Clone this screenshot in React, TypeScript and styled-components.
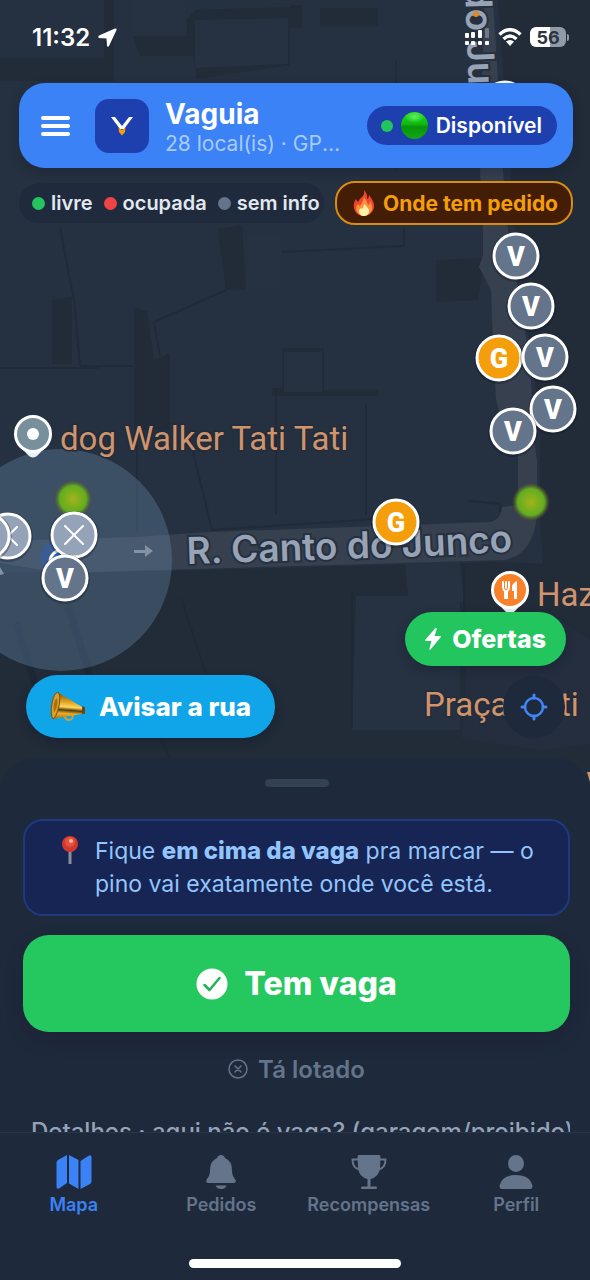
import React from "react";
import styled, { createGlobalStyle } from "styled-components";

const GlobalStyle = createGlobalStyle`
  *, *::before, *::after { box-sizing: border-box; }
  body {
    margin: 0;
    background: #1e293b;
    font-family: Inter, "Liberation Sans", sans-serif;
    color: #ffffff;
  }
  button { font-family: inherit; border: 0; padding: 0; cursor: pointer; color: inherit; }
  svg { display: block; flex: none; }
`;

const Screen = styled.div`
  display: flex;
  flex-direction: column;
  height: 100vh;
  overflow: hidden;
`;

/* ---------- Map ---------- */

const MapArea = styled.main`
  position: relative;
  flex: 1;
  min-height: 0;
  display: flex;
  flex-direction: column;
  padding-bottom: 56px;
  background: #253040;
`;

const MapCanvas = styled.svg`
  position: absolute;
  inset: 0;
  width: 100%;
  height: 100%;
`;

const StreetName = styled.text`
  font-size: 37px;
  font-weight: 600;
  fill: #98a4b5;
  stroke: #253040;
  stroke-width: 4px;
  paint-order: stroke;
`;

const PlaceName = styled.text`
  font-family: Roboto, Inter, sans-serif;
  font-size: 33px;
  font-weight: 400;
  fill: #cf946c;
  stroke: #232c3a;
  stroke-width: 3px;
  paint-order: stroke;
`;

const SpotLetter = styled.text`
  font-family: Roboto, Inter, sans-serif;
  font-size: 27px;
  font-weight: 900;
  fill: #ffffff;
  text-anchor: middle;
`;

type SpotKind = "V" | "G" | "X";
const spotFill: Record<SpotKind, string> = { V: "#64748b", G: "#f59e0b", X: "#94a3b8" };

function Spot({ x, y, kind }: { x: number; y: number; kind: SpotKind }) {
  return (
    <g transform={`translate(${x} ${y})`}>
      <circle r="25" cy="1" fill="#0f172a" opacity="0.3" />
      <circle r="22" fill={spotFill[kind]} stroke="#ffffff" strokeWidth="3" />
      {kind === "X" ? (
        <path d="M-9 -9 9 9M9 -9-9 9" stroke="#ffffff" strokeWidth="2" strokeLinecap="round" />
      ) : (
        <SpotLetter y="10">{kind}</SpotLetter>
      )}
    </g>
  );
}

function PlacePin({ x, y, fill, children }: { x: number; y: number; fill: string; children: React.ReactNode }) {
  return (
    <g transform={`translate(${x} ${y})`}>
      <path d="M-17 8 Q-12 14-5 21 Q0 26 5 21 Q12 14 17 8Z" fill="#e8f1f4" />
      <circle r="17.500" fill={fill} stroke="#ffffff" strokeWidth="3" />
      {children}
    </g>
  );
}

const spots: { x: number; y: number; kind: SpotKind }[] = [
  { x: 505, y: 104, kind: "V" },
  { x: 516, y: 256, kind: "V" },
  { x: 531, y: 306, kind: "V" },
  { x: 499, y: 358, kind: "G" },
  { x: 545, y: 357, kind: "V" },
  { x: 553, y: 409, kind: "V" },
  { x: 513, y: 431, kind: "V" },
  { x: 396, y: 522, kind: "G" },
  { x: 8, y: 536, kind: "X" },
  { x: -13, y: 536, kind: "X" },
  { x: 74, y: 535, kind: "X" },
  { x: 65, y: 578, kind: "V" },
];

function CityMap() {
  return (
    <MapCanvas viewBox="0 0 590 794" preserveAspectRatio="xMinYMin slice" role="img" aria-label="Mapa">
      <defs>
        <radialGradient id="heat">
          <stop offset="0" stopColor="#a3b31a" />
          <stop offset="0.35" stopColor="#82b01d" />
          <stop offset="0.7" stopColor="#62ad20" />
          <stop offset="0.82" stopColor="#5a8a25" stopOpacity="0.7" />
          <stop offset="1" stopColor="#7a4a20" stopOpacity="0" />
        </radialGradient>
        <path id="junco" d="M187 564 L370 558 Q450 556 530 550" />
      </defs>

      {/* building blocks and their shadows */}
      <g fill="#222b38">
        <path d="M0 58H104V0H114V81H0Z" />
        <path d="M133 36H187V20L195 10 290 7V65L197 79 193 56H140Z" />
        <path d="M498 0H590V790H560L540 520V420L515 230Z" />
        <path d="M320 8H378V26H320ZM290 5H302V28H290Z" />
        <path d="M52 300 72 297V364H52ZM134 308 147 311 154 360 170 353V430H134Z" />
        <path d="M218 229 242 225 246 290H226ZM436 260 484 258 478 300 436 302Z" />
        <path d="M282 348H324V390H378V396H272V388H282Z" />
        <path d="M0 573 170 571 500 562 590 566V790H0Z" />
      </g>
      <g fill="#263142">
        <path d="M195 20 288 18V64L195 68ZM133 0H185V34H133Z" />
        <path d="M247 234H281V288H247Z" />
        <path d="M284 352H322V392H284Z" />
        <path d="M356 596H460V730H352Z" />
        <path d="M404 556 459 553 464 602H409Z" />
        <path d="M470 616 548 612 590 640V744L540 750 462 738Z" opacity="0.7" />
      </g>
      <g fill="none" stroke="#1f2836" strokeWidth="2">
        <path d="M0 368H98M80 366H134M60 228 74 300 80 366M154 322 226 290M154 322 160 356M282 252 404 246V228" opacity="0.7" />
        <path d="M276 388V515M366 404V515M137 440V533M190 440 212 530 362 520 380 518M468 501 500 504V512" opacity="0.7" />
        <path d="M181 598 206 674M160 738 170 758M352 590V728M464 566V616" />
        <path d="M396 60V170" opacity="0.6" />
      </g>

      {/* roads */}
      <path
        d="M484 0H493L498 80 503 170 508 230 520 300 530 360 534 440 537 460V515Q533 555 505 560L300 566 60 573 0 563V541L135 537 210 532 490 522Q501 520 502 507L518 505V450L507 440 496 400 492 320 491 290 479 267 483 255V230L480 170 482 80Z"
        fill="#36404f"
      />
      <path d="M16 623 40 700M68 605 94 690" stroke="#1e2735" strokeWidth="7" />

      {/* location accuracy area */}
      <circle cx="61" cy="560" r="111" fill="#6f97bd" opacity="0.3" />
      <path d="M134 550H145V545L153 551 145 557V553H134Z" fill="#8493a3" />
      <path d="M0 567V575L4 574Z" fill="#8493a3" />
      <circle cx="58" cy="558" r="18" fill="#2f5db5" opacity="0.5" />
      <circle cx="62" cy="562" r="12" fill="#2563d0" stroke="#ffffff" strokeWidth="3" />

      <PlaceName x="60" y="450">dog Walker Tati Tati</PlaceName>
      <PlaceName x="537" y="606">Hazul</PlaceName>
      <PlaceName x="424" y="716">Praça Taiti</PlaceName>
      <path d="M587 772H590V782Z" fill="#cf946c" />

      <StreetName>
        <textPath href="#junco">R. Canto do Junco</textPath>
      </StreetName>
      <StreetName transform="translate(465 -14) rotate(88)">do Junco</StreetName>
      <circle cx="476" cy="14" r="3" fill="#e08a1e" />

      <PlacePin x={33} y={434} fill="#78909c">
        <circle r="6" fill="#ffffff" />
      </PlacePin>
      <PlacePin x={510} y={590} fill="#f9812a">
        <path
          d="M-7 -8V-3Q-7 0-5 1V8H-3V1Q-1 0-1 -3V-8M-4 -8V-2"
          fill="none"
          stroke="#ffffff"
          strokeWidth="2"
          strokeLinecap="round"
        />
        <path d="M7 -9Q1 -7 2 1H4V9H7Z" fill="#ffffff" />
      </PlacePin>

      <circle cx="73" cy="499" r="19" fill="url(#heat)" />
      <circle cx="531" cy="502" r="19" fill="url(#heat)" />
      {spots.map((s) => (
        <Spot key={`${s.x}-${s.y}`} {...s} />
      ))}
    </MapCanvas>
  );
}

/* ---------- Status bar ---------- */

const StatusBar = styled.div`
  position: relative;
  display: flex;
  align-items: center;
  justify-content: space-between;
  height: 83px;
  padding: 0 21px 9px 32px;
`;

const StatusGroup = styled.div`
  display: flex;
  align-items: center;
  gap: 8px;
  font-size: 24px;
  font-weight: 600;
`;

const Battery = styled.span`
  display: flex;
  align-items: center;
  justify-content: center;
  width: 36px;
  height: 20px;
  border-radius: 6px;
  background: linear-gradient(90deg, #ffffff 56%, #929aa6 56%);
  color: #2b3442;
  font-size: 18px;
  font-weight: 700;
`;

const BatteryTip = styled.span`
  width: 2px;
  height: 7px;
  margin-left: -7px;
  border-radius: 0 2px 2px 0;
  background: #929aa6;
`;

/* ---------- Header ---------- */

const Header = styled.header`
  position: relative;
  display: flex;
  align-items: center;
  height: 85px;
  margin: 0 17px 0 19px;
  padding: 0 16px 0 22px;
  border-radius: 26px;
  background: #3b82f6;
  box-shadow: 0 4px 12px rgba(15, 23, 42, 0.3);
`;

const MenuButton = styled.button`
  display: flex;
  flex-direction: column;
  gap: 4px;
  width: 29px;
  background: none;
`;

const MenuLine = styled.span`
  width: 100%;
  height: 4px;
  border-radius: 2px;
  background: #ffffff;
`;

const Logo = styled.div`
  display: flex;
  align-items: center;
  justify-content: center;
  width: 54px;
  height: 54px;
  margin-left: 25px;
  border-radius: 14px;
  background: #1e40af;
`;

const Titles = styled.div`
  flex: 1;
  min-width: 0;
  margin: 0 26px 0 16px;
  padding-top: 4px;
`;

const Title = styled.h1`
  margin: 0;
  font-size: 28px;
  line-height: 32px;
  font-weight: 700;
`;

const Subtitle = styled.p`
  margin: 0;
  font-size: 21px;
  line-height: 28px;
  color: #a9cbfc;
  white-space: nowrap;
  overflow: hidden;
  text-overflow: ellipsis;
`;

const Availability = styled.button`
  display: flex;
  align-items: center;
  gap: 8px;
  height: 39px;
  padding: 0 15px 0 14px;
  border-radius: 20px;
  background: #1e40af;
  font-size: 21px;
  font-weight: 600;
`;

const Dot = styled.span<{ $color: string; $size: number }>`
  flex: none;
  width: ${(p) => p.$size}px;
  height: ${(p) => p.$size}px;
  border-radius: 50%;
  background: ${(p) => p.$color};
`;

const GlossyBall = styled.span`
  width: 27px;
  height: 27px;
  border-radius: 50%;
  background:
    radial-gradient(ellipse 10px 6px at 50% 18%, #5df35d, rgba(60, 220, 60, 0)),
    linear-gradient(#22d822, #0fb80f 45%, #06940a 55%, #13a813);
`;

const FilterRow = styled.div`
  position: relative;
  display: flex;
  align-items: center;
  justify-content: space-between;
  margin: 13px 17px 0 19px;
`;

const Legend = styled.ul`
  display: flex;
  align-items: center;
  gap: 11px;
  height: 40px;
  margin: 0;
  padding: 0 4px 0 13px;
  border-radius: 20px;
  background: rgba(30, 41, 59, 0.8);
  list-style: none;
`;

const LegendItem = styled.li`
  display: flex;
  align-items: center;
  gap: 6px;
  font-size: 20px;
  font-weight: 600;
  color: #e2e8f0;
  white-space: nowrap;
`;

const DemandButton = styled.button`
  display: flex;
  align-items: center;
  gap: 8px;
  height: 44px;
  padding: 0 13px 0 16px;
  border: 2px solid #d98c0f;
  border-radius: 20px;
  background: #431d05;
  color: #f59e0b;
  font-size: 21px;
  font-weight: 700;
  white-space: nowrap;
`;

/* ---------- Floating actions ---------- */

const FloatingRow = styled.div`
  position: relative;
  display: flex;
  align-items: flex-end;
  justify-content: space-between;
  margin-top: auto;
  padding: 0 24px 0 26px;
`;

const FloatingStack = styled.div`
  display: flex;
  flex-direction: column;
  align-items: flex-end;
  gap: 10px;
`;

const Pill = styled.button<{ $bg: string; $height: number; $size: number }>`
  display: flex;
  align-items: center;
  gap: 11px;
  height: ${(p) => p.$height}px;
  padding: 0 20px;
  border-radius: 32px;
  background: ${(p) => p.$bg};
  box-shadow: 0 4px 10px rgba(15, 23, 42, 0.35);
  font-size: ${(p) => p.$size}px;
  font-weight: 800;
`;

const AlertPill = styled(Pill)`
  gap: 13px;
  padding: 0 24px;
`;

const LocateButton = styled.button`
  display: flex;
  align-items: center;
  justify-content: center;
  width: 62px;
  height: 62px;
  margin-right: 1px;
  border-radius: 50%;
  background: #1e293b;
`;

/* ---------- Sheet ---------- */

const Sheet = styled.section`
  position: relative;
  display: flex;
  flex-direction: column;
  flex: none;
  max-height: 374px;
  margin-top: -36px;
  padding: 21px 20px 0 23px;
  overflow: hidden;
  border-radius: 36px 36px 0 0;
  background: #1e293b;
`;

const Handle = styled.span`
  flex: none;
  align-self: center;
  width: 64px;
  height: 8px;
  border-radius: 4px;
  background: #334155;
`;

const Tip = styled.div`
  display: flex;
  flex: none;
  gap: 16px;
  margin-top: 32px;
  padding: 14px 20px 13px 36px;
  border: 2px solid #1e3a7e;
  border-radius: 20px;
  background: #172554;
`;

const TipText = styled.p`
  margin: 0;
  font-size: 23px;
  line-height: 33px;
  color: #93c5fd;
`;

const Emphasis = styled.strong`
  font-size: 24px;
  line-height: 24px;
  font-weight: 800;
`;

const PrimaryButton = styled.button`
  display: flex;
  flex: none;
  align-items: center;
  justify-content: center;
  gap: 16px;
  height: 97px;
  margin-top: 19px;
  border-radius: 26px;
  background: #25c75f;
  box-shadow: 0 8px 16px rgba(30, 27, 50, 0.4);
  font-size: 32px;
  font-weight: 800;
`;

const FullButton = styled.button`
  display: flex;
  flex: none;
  align-items: center;
  justify-content: center;
  gap: 10px;
  height: 74px;
  background: none;
  color: #64748b;
  font-size: 24px;
  font-weight: 600;
`;

const DetailsButton = styled.button`
  flex: none;
  margin-top: 12px;
  padding-left: 8px;
  overflow: hidden;
  background: none;
  color: #94a3b8;
  font-size: 24px;
  line-height: 28px;
  font-weight: 500;
  text-align: left;
  white-space: nowrap;
`;

/* ---------- Tab bar ---------- */

const Footer = styled.footer`
  position: relative;
  flex: none;
  display: flex;
  flex-direction: column;
  align-items: center;
  padding-bottom: 12px;
  border-top: 1px solid #29364a;
  background: #1e293b;
`;

const Tabs = styled.nav`
  display: grid;
  grid-template-columns: repeat(4, 1fr);
  width: 100%;
  padding: 21px 0 42px;
`;

const Tab = styled.a<{ $active?: boolean }>`
  display: flex;
  flex-direction: column;
  align-items: center;
  gap: 3px;
  color: ${(p) => (p.$active ? "#3b82f6" : "#64748b")};
  font-size: 18px;
  line-height: 24px;
  font-weight: 600;
  text-decoration: none;
`;

const HomeIndicator = styled.span`
  width: 212px;
  height: 9px;
  border-radius: 5px;
  background: #ffffff;
`;

/* ---------- Icons ---------- */

const LocationArrow = () => (
  <svg width="19" height="19" viewBox="0 0 19 19" fill="#fff">
    <path d="M17 0.500 1 7.500Q-.5 9 1 10L8.500 10.500 9 18Q10 19.500 11 18L18.500 2Q19 0 17 .5Z" />
  </svg>
);

const Signal = () => (
  <svg width="26" height="18" viewBox="0 0 26 18" fill="#fff">
    <rect x="1" y="5" width="4" height="5" rx="1" />
    <rect x="7" y="4" width="4" height="6" rx="1" />
    <rect x="14" y="2" width="4" height="8" rx="1" />
    <rect x="21" y="0" width="4" height="10" rx="1" opacity="0.3" />
    <rect x="1" y="13" width="4" height="4" rx="1" />
    <rect x="7" y="13" width="4" height="4" rx="1" />
    <rect x="14" y="13" width="4" height="4" rx="1" />
    <rect x="21" y="13" width="4" height="4" rx="1" />
  </svg>
);

const Wifi = () => (
  <svg width="24" height="18" viewBox="0 0 24 18" fill="none" stroke="#fff" strokeWidth="3.500">
    <path d="M1.500 6.500Q12-3 22.500 6.500" />
    <path d="M5.500 11Q12 5 18.500 11" />
    <path d="M8 13.500Q12 10.500 16 13.500L12 18Z" fill="#fff" stroke="none" />
  </svg>
);

const LogoMark = () => (
  <svg width="24" height="22" viewBox="0 0 24 22">
    <path d="M1 2H5L12 11 19 2H23L14 14H10Z" fill="#fff" />
    <path d="M8.500 12.500 12 15 15.500 12.500 15 17 12 20.500 9 17Z" fill="#f59e0b" />
  </svg>
);

const Flame = () => (
  <svg width="22" height="26" viewBox="0 0 22 26">
    <path d="M11 0Q15 4 14 9Q16 8 16 5Q22 12 21 18Q19 25 11 26Q2 25 1 18Q0 13 3 9Q4 11 5 12Q6 9 9 7Q12 4 11 0Z" fill="#f0442e" />
    <path d="M11 7Q14 11 15 15Q17 14 17 11Q20 16 19 20Q17 25 11 26Q4 25 3 19Q3 16 5 14L7 16Q10 12 11 7Z" fill="#fb923c" />
    <path d="M11 14Q17 19 16 22Q15 26 11 26Q6 26 6 21Q6 19 8 18L9 19Q11 17 11 14Z" fill="#fff1a8" />
  </svg>
);

const Bolt = () => (
  <svg width="16" height="22" viewBox="0 0 16 22" fill="#fff">
    <path d="M11 0Q12 0 11.500 2L9.500 8H15Q16.500 8 15.500 9.500L5.500 21.500Q4 22.500 4.500 20.500L6.500 13H1Q-.5 13 .5 11.500L10 .5Q10.500 0 11 0Z" />
  </svg>
);

const Megaphone = () => (
  <svg width="36" height="30" viewBox="0 0 36 30">
    <defs>
      <linearGradient id="brass" x1="0.1" y1="0" x2="0" y2="1">
        <stop offset="0" stopColor="#8a5a10" />
        <stop offset="0.3" stopColor="#e0a01e" />
        <stop offset="0.5" stopColor="#ffd95e" />
        <stop offset="0.62" stopColor="#5a3c10" />
        <stop offset="0.75" stopColor="#e8b02a" />
        <stop offset="1" stopColor="#a06c14" />
      </linearGradient>
    </defs>
    <path d="M14 22Q15 28 19 28Q23 28 23 22" fill="none" stroke="#c9a23a" strokeWidth="2" />
    <path d="M9 1 32 15H34.500V21L31 22 3 27Z" fill="url(#brass)" />
    <path d="M32 14.500 35 15V21.500L32 22Z" fill="#6b4510" />
    <path d="M8 0Q11 3 9 14Q6 26 3 27Q0 23 2 11Q4 1 8 0Z" fill="#dca024" stroke="#7a4d0c" />
    <path d="M7 6Q8 9 7 14Q5 20 4 20Q3 17 4 11Q5 7 7 6Z" fill="#a87016" />
  </svg>
);

const Crosshair = () => (
  <svg width="28" height="28" viewBox="0 0 28 28" fill="none" stroke="#4285f4" strokeWidth="3" strokeLinecap="round">
    <circle cx="14" cy="14" r="9" strokeWidth="2.500" />
    <path d="M14 2V5M14 23V26M2 14H5M23 14H26" />
  </svg>
);

const Pushpin = () => (
  <svg width="18" height="30" viewBox="0 0 18 30">
    <path d="M9 14V29" stroke="#8b8f96" strokeWidth="3" />
    <circle cx="9" cy="9" r="8" fill="#d3382e" />
    <circle cx="9" cy="7" r="5" fill="#e4513f" />
    <circle cx="10" cy="6" r="2" fill="#ffb59a" />
  </svg>
);

const CheckBadge = () => (
  <svg width="32" height="32" viewBox="0 0 32 32">
    <circle cx="16" cy="16" r="15.500" fill="#fff" />
    <path d="M8.500 17 13.500 22 23.500 10" fill="none" stroke="#22b455" strokeWidth="2.500" strokeLinecap="round" strokeLinejoin="round" />
  </svg>
);

const CrossCircle = () => (
  <svg width="20" height="20" viewBox="0 0 20 20" fill="none" stroke="currentColor" strokeWidth="1.500" strokeLinecap="round">
    <circle cx="10" cy="10" r="9" />
    <path d="M7 7 13 13M13 7 7 13" />
  </svg>
);

const TabIcon = ({ children }: { children: React.ReactNode }) => (
  <svg width="36" height="36" viewBox="0 0 36 36" fill="currentColor">
    {children}
  </svg>
);

const MapIcon = () => (
  <TabIcon>
    <path d="M11 1V29L3 34.500Q.5 35.500.5 33V9Q.5 7 2 6Z" />
    <path d="M13 1 22.500 6V35L13 29.500Z" />
    <path d="M24.500 7 33 1.500Q35.500.5 35.500 3V27Q35.500 29 34 30L24.500 35Z" />
  </TabIcon>
);

const BellIcon = () => (
  <TabIcon>
    <path d="M18 1Q21 1 22 4Q29 7 29 16Q29 22 32 25Q34 28 31 29H5Q2 28 4 25Q7 22 7 16Q7 7 14 4Q15 1 18 1Z" />
    <path d="M12.500 31.500H23.500Q22 35 18 35Q14 35 12.500 31.500Z" />
  </TabIcon>
);

const TrophyIcon = () => (
  <TabIcon>
    <path d="M8 1H28Q29.500 1 29.500 3L29 14Q28 23 19.500 25V32.500H25Q26 32.500 26 34Q26 35 25 35H11Q10 35 10 34Q10 32.500 11 32.500H16.500V25Q8 23 7 14L6.500 3Q6.500 1 8 1Z" />
    <path d="M8 5.500H1.500Q1.500 14 8.500 15.500M28 5.500H34.500Q34.500 14 27.500 15.500" fill="none" stroke="currentColor" strokeWidth="2" />
  </TabIcon>
);

const PersonIcon = () => (
  <TabIcon>
    <ellipse cx="18" cy="9.500" rx="8" ry="8.500" />
    <path d="M18 21Q32 21 34.500 32Q34.500 35 32 35H4Q1.500 35 1.500 32Q4 21 18 21Z" />
  </TabIcon>
);

const tabs = [
  { label: "Mapa", icon: <MapIcon />, active: true },
  { label: "Pedidos", icon: <BellIcon /> },
  { label: "Recompensas", icon: <TrophyIcon /> },
  { label: "Perfil", icon: <PersonIcon /> },
];

const legend = [
  { label: "livre", color: "#22c55e" },
  { label: "ocupada", color: "#ef4444" },
  { label: "sem info", color: "#64748b" },
];

export default function App() {
  return (
    <Screen>
      <GlobalStyle />
      <MapArea>
        <CityMap />
        <StatusBar>
          <StatusGroup>
            11:32
            <LocationArrow />
          </StatusGroup>
          <StatusGroup>
            <Signal />
            <Wifi />
            <Battery>56</Battery>
            <BatteryTip />
          </StatusGroup>
        </StatusBar>

        <Header>
          <MenuButton aria-label="Menu">
            <MenuLine />
            <MenuLine />
            <MenuLine />
          </MenuButton>
          <Logo>
            <LogoMark />
          </Logo>
          <Titles>
            <Title>Vaguia</Title>
            <Subtitle>28 local(is) · GPS ativo</Subtitle>
          </Titles>
          <Availability>
            <Dot $color="#22c55e" $size={12} />
            <GlossyBall />
            Disponível
          </Availability>
        </Header>

        <FilterRow>
          <Legend>
            {legend.map((item) => (
              <LegendItem key={item.label}>
                <Dot $color={item.color} $size={13} />
                {item.label}
              </LegendItem>
            ))}
          </Legend>
          <DemandButton>
            <Flame />
            Onde tem pedido
          </DemandButton>
        </FilterRow>

        <FloatingRow>
          <AlertPill $bg="#10a5e9" $height={63} $size={26}>
            <Megaphone />
            Avisar a rua
          </AlertPill>
          <FloatingStack>
            <Pill $bg="#22c55e" $height={54} $size={25}>
              <Bolt />
              Ofertas
            </Pill>
            <LocateButton aria-label="Minha localização">
              <Crosshair />
            </LocateButton>
          </FloatingStack>
        </FloatingRow>
      </MapArea>

      <Sheet>
        <Handle />
        <Tip>
          <Pushpin />
          <TipText>
            Fique <Emphasis>em cima da vaga</Emphasis> pra marcar — o pino vai exatamente onde você está.
          </TipText>
        </Tip>
        <PrimaryButton>
          <CheckBadge />
          Tem vaga
        </PrimaryButton>
        <FullButton>
          <CrossCircle />
          Tá lotado
        </FullButton>
        <DetailsButton>Detalhes · aqui não é vaga? (garagem/proibido)</DetailsButton>
      </Sheet>

      <Footer>
        <Tabs>
          {tabs.map((tab) => (
            <Tab key={tab.label} href="#" $active={tab.active}>
              {tab.icon}
              {tab.label}
            </Tab>
          ))}
        </Tabs>
        <HomeIndicator />
      </Footer>
    </Screen>
  );
}
